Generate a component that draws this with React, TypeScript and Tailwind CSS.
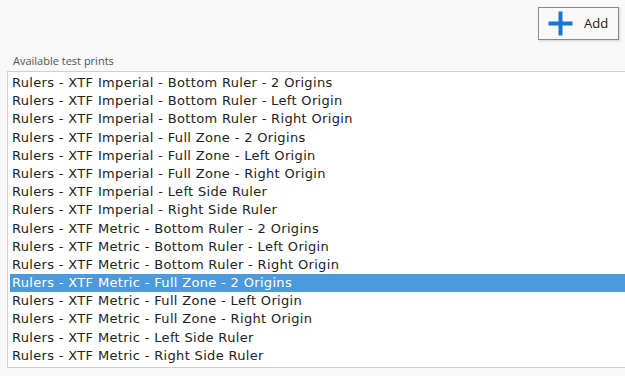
import React from "react";

const items = [
  "Rulers - XTF Imperial - Bottom Ruler - 2 Origins",
  "Rulers - XTF Imperial - Bottom Ruler - Left Origin",
  "Rulers - XTF Imperial - Bottom Ruler - Right Origin",
  "Rulers - XTF Imperial - Full Zone - 2 Origins",
  "Rulers - XTF Imperial - Full Zone - Left Origin",
  "Rulers - XTF Imperial - Full Zone - Right Origin",
  "Rulers - XTF Imperial - Left Side Ruler",
  "Rulers - XTF Imperial - Right Side Ruler",
  "Rulers - XTF Metric - Bottom Ruler - 2 Origins",
  "Rulers - XTF Metric - Bottom Ruler - Left Origin",
  "Rulers - XTF Metric - Bottom Ruler - Right Origin",
  "Rulers - XTF Metric - Full Zone - 2 Origins",
  "Rulers - XTF Metric - Full Zone - Left Origin",
  "Rulers - XTF Metric - Full Zone - Right Origin",
  "Rulers - XTF Metric - Left Side Ruler",
  "Rulers - XTF Metric - Right Side Ruler",
];

export default function App() {
  return (
    <div
      className="w-[625px] h-[376px] bg-[#f8f8f8] overflow-hidden"
      style={{ fontFamily: '"Open Sans", "Noto Sans", sans-serif' }}
    >
      <div className="flex justify-end pt-[7px] pr-[6px]">
        <button className="w-[81px] h-[33px] flex items-center border border-[#8a8a8a] bg-[#f9f9f9] shadow-[1px_1px_2px_rgba(0,0,0,0.15)] pl-[9px]">
          <svg width="25" height="25" viewBox="0 0 25 25">
            <rect x="10.5" y="0.5" width="4" height="24" fill="#1b76d1" />
            <rect x="0.5" y="10.5" width="24" height="4" fill="#1b76d1" />
          </svg>
          <span className="ml-[11px] text-[13px] text-[#1a1a1a] leading-none">Add</span>
        </button>
      </div>
      <div className="pl-[13px] mt-[14px] text-[11px] leading-[14px] text-[#555]">Available test prints</div>
      <div
        className="ml-[7px] mt-[3px] w-[630px] bg-white border border-[#c9d1d8] pt-[2px] pl-[2px] pb-[2px]"
        style={{ fontFamily: '"DejaVu Sans", sans-serif' }}
      >
        {items.map((t, i) => (
          <div
            key={i}
            className={`h-[18.2px] leading-[18px] text-[13px] tracking-[0.33px] pl-[2px] whitespace-nowrap ${
              i === 11 ? "bg-[#4a9add] text-white" : "text-[#222]"
            }`}
          >
            {t}
          </div>
        ))}
      </div>
    </div>
  );
}
